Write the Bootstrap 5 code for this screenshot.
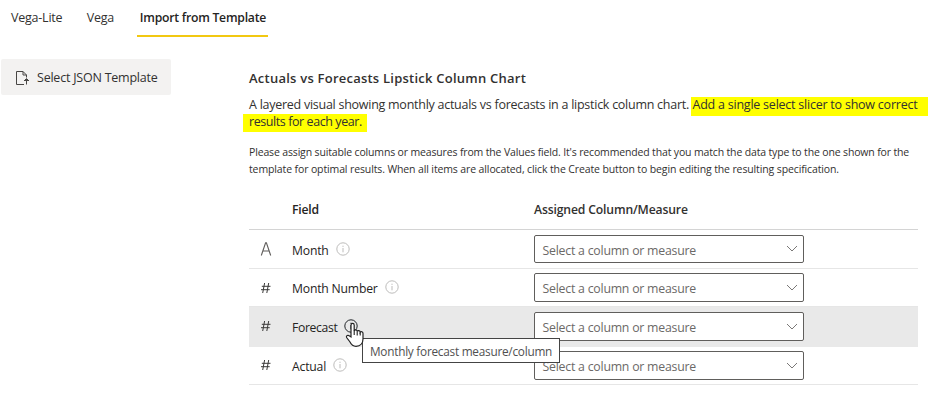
<!DOCTYPE html>
<html lang="en">
<head>
<meta charset="utf-8">
<title>Import from Template</title>
<link href="https://cdn.jsdelivr.net/npm/bootstrap@5.3.0/dist/css/bootstrap.min.css" rel="stylesheet">
<style>
body{font:12.5px/17px "Open Sans","Noto Sans",sans-serif;color:#323130;letter-spacing:-.225px;white-space:nowrap;overflow:hidden;height:405px}
svg{display:block;flex:none}
.tabs{height:37px;padding-left:11px;font-size:12.5px}
.tabs .nav-link{padding:9px 0 0;height:37px;color:#323130;font-size:12.5px}
.tabs .vega{margin-left:24.5px;letter-spacing:-.3px}
.tabs .current{margin-left:23.4px;width:131px;padding-left:2.5px;font-weight:600;font-size:12.2px;letter-spacing:-.235px;border-bottom:2px solid #f2c811;color:#252423}
.pick{margin:22px 0 0 1px;width:170px;height:36px;padding:1px 0 0 14px;background:#f3f2f1;border:0;border-radius:2px;font-size:12.5px;line-height:17px;letter-spacing:-.225px;color:#323130}
.pick svg{margin-right:7px}
.content{margin-left:78px;width:669px;padding-top:32px}
.title{font-size:13px;line-height:18px;font-weight:600;letter-spacing:.235px;margin:0}
.desc{margin:9px 0 0;letter-spacing:-.262px}
.hl{background:linear-gradient(transparent 1px,#ff0 1px);letter-spacing:-.23px;padding:0 11px 3px 1px;margin-left:-.5px}
.hl-2{letter-spacing:-.42px;padding:0 5px 2px 6px;margin-left:-6px}
.hint{font-size:10.5px;margin:14px 0 0;letter-spacing:-.154px}
.hint .second{letter-spacing:-.123px}
.field{height:39px;border-bottom:1px solid #e6e6e6}
.field.head{height:53px;border-color:#d4d4d4;font-weight:600;font-size:12.2px;letter-spacing:-.15px;margin-top:-1px;padding-bottom:11px}
.field.short{height:38px}
.field.hover{height:40px;background:#e9e9e9;border-color:#e9e9e9}
.kind{width:43px;padding-left:11px}
.name{width:242px;font-size:12.2px;letter-spacing:-.2px;color:#252423}
.name span{padding-top:3px}
.name svg{margin-left:7px;color:#bdbcbb}
.hover .name{letter-spacing:-.35px}
.hover .kind,.hover .name,.last .kind,.last .name{padding-bottom:2px}
.num .name span{padding-top:2px}
.num .name{padding-bottom:1px}
.pickfield{width:270px;height:29px;padding:1px 5px 0 7.5px;background:#fff;border:1px solid #605e5c;border-radius:2px;font-size:12.3px;letter-spacing:-.222px;color:#6b6967}
.pickfield svg{margin-top:-1px}
.first .pickfield{height:28px;padding-top:3px}
.first .pickfield svg{margin-top:-3px}
.tip{left:362px;top:338px;width:198px;height:25px;border:1px solid #444;background:#fff;color:#505050;font-size:11.8px;line-height:24px;letter-spacing:-.25px;padding-left:7px;z-index:2}
.pointer{left:345px;top:322px;z-index:3}
</style>
<script src="https://cdn.jsdelivr.net/npm/bootstrap@5.3.0/dist/js/bootstrap.bundle.min.js"></script>
</head>
<body class="bg-white">
<svg width="0" height="0" class="position-absolute">
<symbol id="info" viewBox="0 0 14 14"><circle cx="7" cy="7" r="6.2" fill="none" stroke="currentColor"/><path d="M7 6v4.3M7 3.7v1.2" stroke="currentColor"/></symbol>
<symbol id="hash" viewBox="0 0 12 12"><path d="M4.6 1 2.7 11M8.7 1 6.8 11M1.800 4.300H10.500M1 7.700H9.700" fill="none" stroke="#3b3a39"/></symbol>
<symbol id="letter" viewBox="0 0 12 14"><path d="M1.300 13.500 5.600.8h.8l4.300 12.700M2.800 9h6.400" fill="none" stroke="#605e5c" stroke-width="1.1"/></symbol>
<symbol id="chev" viewBox="0 0 12 8"><path d="m1 1 5 5 5-5" fill="none" stroke="#7a7877"/></symbol>
</svg>
<nav class="nav tabs flex-nowrap">
<a class="nav-link" href="#">Vega-Lite</a><a class="nav-link vega" href="#">Vega</a><a class="nav-link current" href="#">Import from Template</a>
</nav>
<div class="d-flex align-items-start">
<button class="pick d-flex align-items-center flex-shrink-0"><svg width="15" height="16" viewBox="0 0 15 16"><path d="M9 14.500H1.500v-13h6.500l3.500 3.500v2.500M8 1.500V5h3.500M11.500 14.500V9M9 10.500h5M9.500 10.500l2-2 2 2" fill="none" stroke="#484644"/></svg>Select JSON Template</button>
<main class="content">
<h1 class="title">Actuals vs Forecasts Lipstick Column Chart</h1>
<p class="desc">A layered visual showing monthly actuals vs forecasts in a lipstick column chart. <span class="hl">Add a single select slicer to show correct</span><br><span class="hl hl-2">results for each year.</span></p>
<p class="hint">Please assign suitable columns or measures from the Values field. It's recommended that you match the data type to the one shown for the<br><span class="second">template for optimal results. When all items are allocated, click the Create button to begin editing the resulting specification.</span></p>
<div class="field head d-flex align-items-end"><div class="kind"></div><div class="name">Field</div><div>Assigned Column/Measure</div></div>
<div class="field first d-flex align-items-center"><div class="kind"><svg width="12" height="14"><use href="#letter"/></svg></div><div class="name d-flex align-items-center"><span>Month</span><svg width="14" height="14"><use href="#info"/></svg></div><div class="pickfield d-flex align-items-center justify-content-between"><span>Select a column or measure</span><svg width="12" height="8"><use href="#chev"/></svg></div></div>
<div class="field short num d-flex align-items-center"><div class="kind"><svg width="12" height="12"><use href="#hash"/></svg></div><div class="name d-flex align-items-center"><span>Month Number</span><svg width="14" height="14"><use href="#info"/></svg></div><div class="pickfield d-flex align-items-center justify-content-between"><span>Select a column or measure</span><svg width="12" height="8"><use href="#chev"/></svg></div></div>
<div class="field hover d-flex align-items-center"><div class="kind"><svg width="12" height="12"><use href="#hash"/></svg></div><div class="name d-flex align-items-center"><span>Forecast</span><svg class="text-dark" width="14" height="14"><use href="#info"/></svg></div><div class="pickfield d-flex align-items-center justify-content-between"><span>Select a column or measure</span><svg width="12" height="8"><use href="#chev"/></svg></div></div>
<div class="field short last d-flex align-items-center"><div class="kind"><svg width="12" height="12"><use href="#hash"/></svg></div><div class="name d-flex align-items-center"><span>Actual</span><svg width="14" height="14"><use href="#info"/></svg></div><div class="pickfield d-flex align-items-center justify-content-between"><span>Select a column or measure</span><svg width="12" height="8"><use href="#chev"/></svg></div></div>
</main>
</div>
<div class="tip position-absolute">Monthly forecast measure/column</div>
<svg class="pointer position-absolute" width="20" height="26" viewBox="0 0 20 26"><path d="M6 15V3.200C6 .8 9.200.8 9.200 3.200V9c.5-1.600 3-1.400 3 .5.600-1.400 3-1 3 .8.800-1.200 2.800-.6 2.800 1.200V17c0 4-2.500 7.300-7 7.300-3.300 0-4.800-1.800-6-4.300L1.600 15.500C.8 13.800 3 12.600 4.200 13.800Z" fill="#fff" stroke="#222" stroke-width="1.200"/><path d="M9.200 8.500v4.500M12.200 9.500v4M15.200 10.500v3" stroke="#222" stroke-width="1.100"/></svg>
</body>
</html>
